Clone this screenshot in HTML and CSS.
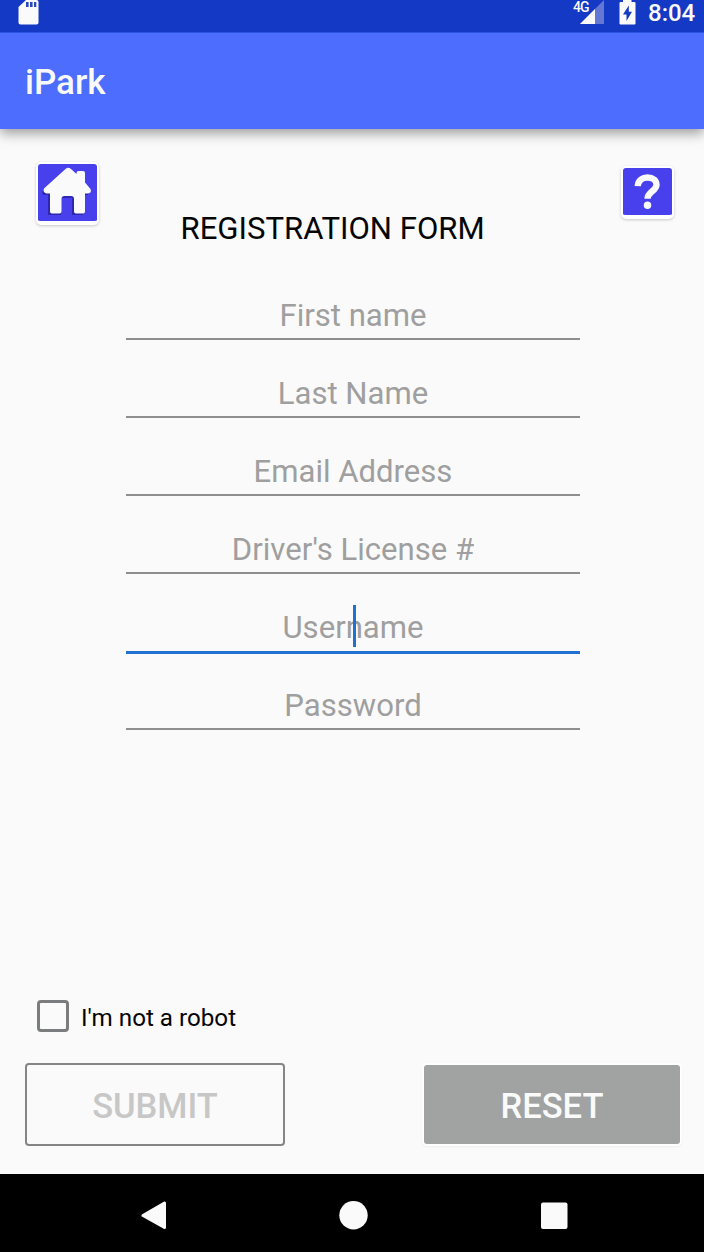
FILE: index.html
```html
<!DOCTYPE html>
<html lang="en">
<head>
<meta charset="utf-8">
<title>iPark</title>
<link rel="stylesheet" href="styles.css">
</head>
<body>
<div class="screen">
  <div class="status">
    <svg class="sd" width="22" height="26" viewBox="0 0 22 26"><path d="M8 0H18.500Q20.500 0 20.500 2V22.500Q20.500 24.500 18.500 24.500H2.500Q.5 24.500 .5 22.500V7Z" fill="#fafafa"/><path d="M8 2h2.600v5H8zM12 2h2.600v5H12zM16 2h2.300v5H16z" fill="#2a49bb"/></svg>
    <div class="network">
      <span class="network-type">4G</span>
      <svg class="signal" width="26" height="26" viewBox="0 0 26 26"><path d="M1 24L25 0V24Z" fill="#6477d2"/><path d="M1 24L16 9V24Z" fill="#fafafa"/></svg>
    </div>
    <svg class="battery" width="17" height="26" viewBox="0 0 17 26"><path d="M4 0H12.500V2H15.500Q16.500 2 16.500 3V23.500Q16.500 24.500 15.500 24.500H1.500Q.5 24.500 .5 23.500V3Q.5 2 1.500 2H4Z" fill="#fafafa"/><path d="M9.800 5.500L4 14.500H7.500V21L13 11.800H9.800Z" fill="#1439c4"/></svg>
    <span class="clock">8:04</span>
  </div>
  <header class="appbar">iPark</header>
  <main class="content">
    <div class="heading">
      <button class="tile tile-home" aria-label="Home">
        <svg width="59" height="57" viewBox="0 0 59 57"><path d="M4 28L28 6L50 28V31H45V51H34V34H23V51H10V31H5Z" fill="#2922a0" opacity=".8"/><path d="M6 24.500L27.500 5Q30.300 2.500 33 5L38.500 10V9Q38.500 7 40.500 7H45Q47 7 47 9V18.500L52.500 25Q54 29 50 29.500H47V47.500Q47 49.500 45 49.500H38Q36 49.500 36 47.500V35Q36 32 33 32H26.500Q23.500 32 23.500 35V47.500Q23.500 49.500 21.500 49.500H14Q12 49.500 12 47.500V29.500H8.500Q4.500 28.500 6 24.500Z" fill="#fafafa"/></svg>
      </button>
      <h1 class="title">REGISTRATION FORM</h1>
      <button class="tile tile-help" aria-label="Help">
        <svg width="50" height="48" viewBox="0 0 50 48"><path d="M15 18C15.500 11.500 20 9.200 25 9.200C30.500 9.200 34.200 12 34.200 16.500C34.200 23 25 23.500 25 31" fill="none" stroke="#fafafa" stroke-width="6.500"/><circle cx="25" cy="37.500" r="3.800" fill="#fafafa"/></svg>
      </button>
    </div>
    <form class="fields">
      <div class="field">First name</div>
      <div class="field">Last Name</div>
      <div class="field">Email Address</div>
      <div class="field">Driver's License #</div>
      <div class="field focused">Username<i class="caret"></i></div>
      <div class="field">Password</div>
    </form>
    <div class="robot"><span class="box"></span><span class="robot-label">I'm not a robot</span></div>
    <div class="actions">
      <button class="submit">SUBMIT</button>
      <button class="reset">RESET</button>
    </div>
  </main>
  <nav class="navbar">
    <svg width="26" height="30" viewBox="0 0 26 30"><path d="M2 15.500L23.500 3V27.500Z" fill="#fafafa" stroke="#fafafa" stroke-width="3" stroke-linejoin="round"/></svg>
    <svg width="30" height="30" viewBox="0 0 30 30"><circle cx="14.500" cy="15.200" r="14.200" fill="#fafafa"/></svg>
    <svg width="27" height="30" viewBox="0 0 27 30"><rect x="0" y="2.500" width="26.500" height="26.500" rx="2" fill="#fafafa"/></svg>
  </nav>
</div>
</body>
</html>
```
FILE: styles.css
```css
* { box-sizing: border-box; }
body { margin: 0; font-family: Roboto, sans-serif; }
button { border: 0; padding: 0; font-family: inherit; }
.screen { width: 704px; height: 1252px; display: flex; flex-direction: column; background: #fafafa; overflow: hidden; }
.status { height: 32px; flex: none; display: flex; align-items: flex-start; background: #1439c4; padding-left: 18px; color: #fafafa; position: relative; z-index: 2; }
.network { display: flex; margin-left: auto; }
.network-type { font-size: 14px; line-height: 14px; font-weight: 500; letter-spacing: -1px; width: 17px; white-space: nowrap; margin-right: -11px; }
.battery { margin-left: 14px; }
.clock { font-size: 24px; line-height: 26px; font-weight: 500; margin-left: 12px; width: 56px; }
.appbar { height: 97px; flex: none; border-top: 1px solid #2856df; background: #4d6dfe; color: #fafafa; font-size: 35px; font-weight: 500; line-height: 100px; padding-left: 25px; box-shadow: 0 4px 12px rgba(0,0,0,.4); z-index: 1; }
.content { flex: 1; display: flex; flex-direction: column; padding-top: 32px; }
.heading { display: flex; height: 100px; padding: 0 30px 0 36px; align-items: flex-start; }
.tile { background: #483fed; border: 2px solid #fefefe; border-width: 2px 2px 4px; border-radius: 5px; box-shadow: 0 1px 3px rgba(0,0,0,.2); display: flex; align-items: center; justify-content: center; }
.tile-home { width: 63px; height: 63px; margin-top: 1px; }
.tile-help { width: 53px; height: 53px; margin: 5px 0 0 auto; }
.title { margin: 50px 0 0 81.500px; font-size: 31.100px; line-height: 36px; font-weight: 400; color: #050505; white-space: nowrap; }
.fields { width: 454px; margin-left: 126px; margin-top: 29px; display: flex; flex-direction: column; }
.field { position: relative; height: 50px; margin-bottom: 28.100px; border-bottom: 2px solid #8e8e8e; text-align: center; font-size: 31.100px; line-height: 52px; color: #9f9f9f; }
.focused { border-bottom: 3px solid #1f71d2; height: 52px; margin-bottom: 26.100px; }
.caret { position: absolute; left: 227px; top: 3px; width: 3px; height: 42px; background: #1f71d2; }
.robot { display: flex; align-items: center; height: 32px; margin: auto 0 31px 37px; }
.box { width: 32px; height: 32px; border: 3px solid #7a7c7e; border-radius: 4px; }
.robot-label { font-size: 24.200px; color: #050505; margin-left: 12px; line-height: 32px; padding-top: 3px; }
.actions { display: flex; justify-content: space-between; align-items: center; padding: 0 24px 28px 25px; }
.submit, .reset { font-size: 34.500px; font-weight: 500; border-radius: 4px; }
.submit { width: 260px; height: 83px; border: 2px solid #858585; background: #fafafa; color: #c7c7c7; padding-top: 3px; }
.reset { width: 256px; height: 79px; border-radius: 3px; background: #a1a3a2; color: #fafafa; padding-top: 3px; box-shadow: 0 0 0 2px #fefefe, 0 1px 2px 2px rgba(0,0,0,.05); }
.navbar { height: 78px; flex: none; background: #000; display: flex; align-items: center; justify-content: space-between; padding: 4px 136px 0 141px; }
```
